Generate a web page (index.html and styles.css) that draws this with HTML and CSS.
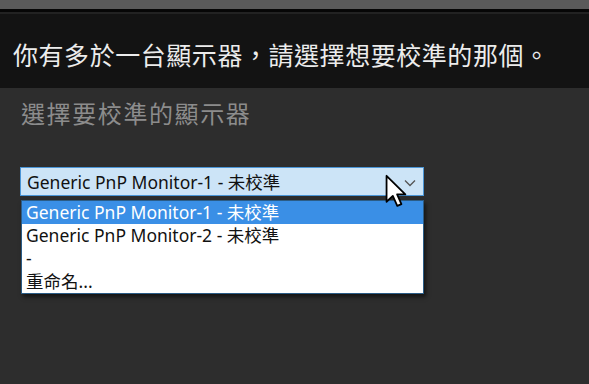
FILE: index.html
```html
<!DOCTYPE html>
<html lang="zh-Hant">
<head>
<meta charset="utf-8">
<link rel="stylesheet" href="styles.css">
</head>
<body>
<div class="topbar"></div>
<div class="rule"></div>
<div class="header">你有多於一台顯示器，請選擇想要校準的那個。</div>
<div class="content">
  <div class="subtitle">選擇要校準的顯示器</div>
  <div class="combo">
    <div class="select">
      <span class="value">Generic PnP Monitor-1 - 未校準</span>
      <svg class="chevron" width="12" height="8" viewBox="0 0 12 8"><path d="M1 1.5 L6 6.5 L11 1.5" fill="none" stroke="#555" stroke-width="1.3"/></svg>
    </div>
    <ul class="list">
      <li class="item active">Generic PnP Monitor-1 - 未校準</li>
      <li class="item">Generic PnP Monitor-2 - 未校準</li>
      <li class="item">-</li>
      <li class="item">重命名...</li>
    </ul>
    <svg class="cursor" width="23" height="34" viewBox="0 0 12 19"><path d="M1 1 L1 15.5 L4.5 12.2 L7 17.8 L9.3 16.8 L6.9 11.4 L11.5 11.4 Z" fill="#fff" stroke="#000" stroke-width="1" stroke-linejoin="round"/></svg>
  </div>
</div>
</body>
</html>
```

FILE: styles.css
```css
html, body {
  margin: 0;
  padding: 0;
}
body {
  width: 589px;
  height: 384px;
  overflow: hidden;
  background: #2d2d2d;
  font-family: "Noto Sans", "Open Sans", "Noto Sans CJK TC", sans-serif;
}
.topbar {
  height: 9px;
  background: #5a5a5a;
}
.rule {
  height: 3px;
  background: #060606;
  border-bottom: 2px solid #222;
}
.header {
  height: 74px;
  background: #131313;
  color: #ececec;
  font-family: "Noto Sans CJK TC", sans-serif;
  font-size: 25px;
  line-height: 74px;
  padding-left: 13px;
  padding-top: 3px;
  box-sizing: border-box;
  letter-spacing: 0.55px;
}
.content {
  padding-left: 20px;
}
.subtitle {
  color: #8c8c8c;
  font-family: "Noto Sans CJK TC", sans-serif;
  font-size: 24px;
  line-height: 30px;
  padding-top: 10px;
  padding-left: 1px;
  letter-spacing: 1.6px;
}
.combo {
  position: relative;
  margin-top: 39px;
  width: 404px;
}
.select {
  height: 29px;
  box-sizing: border-box;
  background: #cce4f7;
  border: 1px solid #4a95d6;
  display: flex;
  align-items: center;
  justify-content: space-between;
  padding: 0 7px 0 6px;
  color: #111;
  font-size: 17.5px;
}
.chevron {
  margin-top: 2px;
}
.list {
  list-style: none;
  margin: 4px 0 0 1px;
  padding: 0;
  width: 403px;
  box-sizing: border-box;
  background: #fff;
  border: 1px solid #2b5c86;
  box-shadow: 2px 3px 4px rgba(0,0,0,0.55);
}
.item {
  height: 23px;
  line-height: 23px;
  padding-left: 4px;
  color: #111;
  font-size: 17.5px;
}
.item.active {
  background: #3a8fe6;
  color: #fff;
}
.cursor {
  position: absolute;
  left: 364px;
  top: 7px;
}
```
